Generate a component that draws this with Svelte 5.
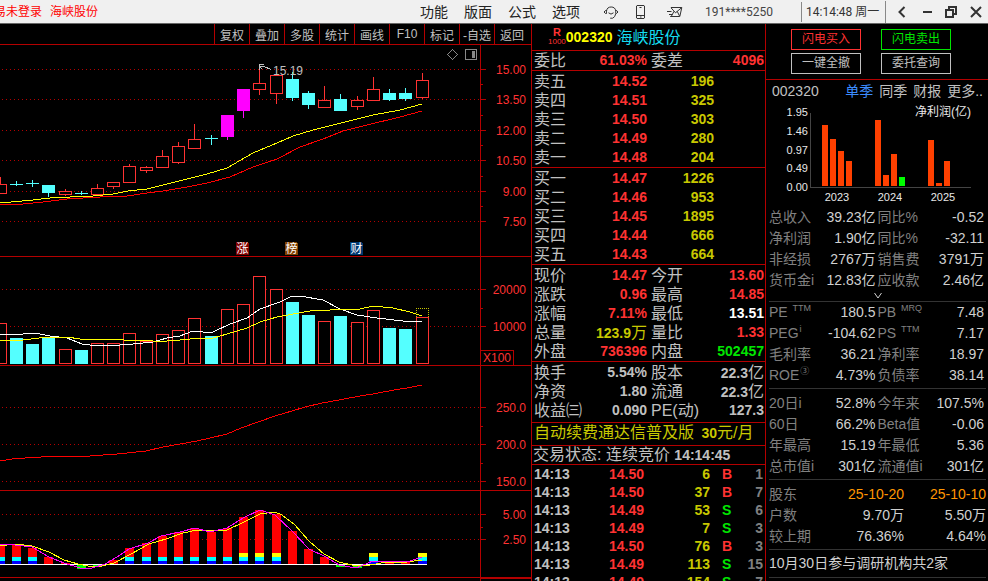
<script lang="ts">
	/**
	 * Stock terminal — K-line chart stack on the left, level-5 quote
	 * board in the middle, fundamentals on the right.
	 *
	 * All chart panels share one vertical coordinate system; each
	 * panel's viewBox starts at its own `top`.
	 */

	type Candle = [kind: 'up' | 'down' | 'limit' | 'doji', high: number, open: number, close: number, low: number];
	type Tone = 'up' | 'down' | 'vol' | 'flat' | 'plain';
	type Cell = [label: string, value: string, tone?: Tone, sup?: string];

	const menus = ['功能', '版面', '公式', '选项'];
	const tools = ['复权', '叠加', '多股', '统计', '画线', 'F10', '标记', '-自选', '返回'];

	const candles: Candle[] = [
		['up', 177, 184, 193, 193],
		['doji', 181, 184, 184, 186],
		['doji', 180, 183, 183, 187],
		['down', 185, 185, 193, 197],
		['up', 189, 191, 194, 196],
		['doji', 191, 193, 193, 195],
		['up', 184, 188, 194, 195],
		['up', 182, 182, 186, 189],
		['up', 164, 166, 182, 183],
		['up', 166, 167, 170, 173],
		['up', 150, 156, 167, 167],
		['up', 142, 146, 162, 164],
		['up', 124, 139, 148, 148],
		['doji', 135, 138, 138, 145],
		['limit', 115, 115, 137, 140],
		['limit', 89, 89, 111, 118],
		['up', 65, 83, 89, 95],
		['up', 75, 75, 93, 104],
		['down', 72, 79, 98, 101],
		['down', 91, 93, 105, 109],
		['up', 86, 100, 107, 107],
		['down', 94, 99, 111, 111],
		['up', 96, 100, 106, 110],
		['up', 77, 89, 100, 101],
		['down', 89, 93, 100, 101],
		['down', 88, 93, 99, 101],
		['up', 73, 80, 97, 99]
	];

	const volumeTops = [
		323, 338, 344, 338, 349, 350, 343, 343, 333, 341, 334, 330, 318, 336, 309, 304, 276, 289, 302,
		315, 321, 316, 322, 310, 328, 329, 317
	];
	const fallingVolume = [1, 2, 3, 5, 13, 18, 19, 21, 24, 25];

	// top edge of each histogram bar; values past the baseline hang below it
	const histogram = [
		545, 545, 548, 557, 563, 569, 567, 560, 548, 543, 536, 532, 528, 532, 528, 517, 510, 514, 531,
		549, 557, 567, 568, 564, 561, 562, 564
	];
	const BASELINE = 564;
	const strongDays = [0, 1, 2, 8, 9, 10, 11, 12, 13, 14, 15, 16, 17, 23, 26];
	const hotDays = [15, 16, 17, 23, 26];

	const panels = [
		{
			id: 'price',
			top: 45,
			height: 211,
			labels: [
				[69, '15.00'],
				[99, '13.50'],
				[130, '12.00'],
				[160, '10.50'],
				[191, '9.00'],
				[221, '7.50']
			],
			minor: [84, 115, 145, 176, 206]
		},
		{
			id: 'volume',
			top: 257,
			height: 108,
			labels: [
				[289, '20000'],
				[326, '10000']
			],
			minor: [308]
		},
		{
			id: 'trend',
			top: 366,
			height: 124,
			labels: [
				[407, '250.0'],
				[444, '200.0'],
				[481, '150.0']
			],
			minor: [426, 463]
		},
		{
			id: 'macd',
			top: 491,
			height: 86,
			labels: [
				[514, '5.00'],
				[539, '2.50']
			],
			minor: [527]
		}
	] as { id: string; top: number; height: number; labels: [number, string][]; minor: number[] }[];

	const badges = [
		{ x: 236, text: '涨', kind: 'rise' },
		{ x: 285, text: '榜', kind: 'rank' },
		{ x: 350, text: '财', kind: 'report' }
	];

	const asks = [
		['卖五', '14.52', '196'],
		['卖四', '14.51', '325'],
		['卖三', '14.50', '303'],
		['卖二', '14.49', '280'],
		['卖一', '14.48', '204']
	];
	const bids = [
		['买一', '14.47', '1226'],
		['买二', '14.46', '953'],
		['买三', '14.45', '1895'],
		['买四', '14.44', '666'],
		['买五', '14.43', '664']
	];

	const quote: Cell[] = [
		['现价', '14.47', 'up'],
		['今开', '13.60', 'up'],
		['涨跌', '0.96', 'up'],
		['最高', '14.85', 'up'],
		['涨幅', '7.11%', 'up'],
		['最低', '13.51', 'flat'],
		['总量', '123.9万', 'vol'],
		['量比', '1.33', 'up'],
		['外盘', '736396', 'up'],
		['内盘', '502457', 'down']
	];
	const shares: Cell[] = [
		['换手', '5.54%'],
		['股本', '22.3亿'],
		['净资', '1.80'],
		['流通', '22.3亿'],
		['收益㈢', '0.090'],
		['PE(动)', '127.3']
	];

	const trades = [
		['14:13', '14.50', '6', 'B', '1'],
		['14:13', '14.50', '37', 'B', '7'],
		['14:13', '14.49', '53', 'S', '6'],
		['14:13', '14.49', '7', 'S', '3'],
		['14:13', '14.50', '76', 'B', '3'],
		['14:13', '14.49', '113', 'S', '15'],
		['14:13', '14.49', '154', 'S', '7']
	];

	const profitBars = [
		{ x: 822, top: 125 },
		{ x: 830, top: 139 },
		{ x: 838, top: 151 },
		{ x: 846, top: 161 },
		{ x: 875, top: 120 },
		{ x: 883, top: 175 },
		{ x: 891, top: 154 },
		{ x: 899, top: 177, forecast: true },
		{ x: 928, top: 140 },
		{ x: 936, top: 183 },
		{ x: 944, top: 161 }
	];
	const profitScale: [number, string][] = [
		[112, '1.95'],
		[131, '1.46'],
		[150, '0.97'],
		[168, '0.49'],
		[187, '0.00']
	];
	const profitYears: [number, string][] = [
		[837, '2023'],
		[890, '2024'],
		[943, '2025']
	];

	const income: Cell[] = [
		['总收入', '39.23亿'],
		['同比%', '-0.52'],
		['净利润', '1.90亿'],
		['同比%', '-32.11'],
		['非经损', '2767万'],
		['销售费', '3791万'],
		['货币金i', '12.83亿'],
		['应收款', '2.46亿']
	];
	const ratios: Cell[] = [
		['PE ', '180.5', 'plain', 'TTM'],
		['PB ', '7.48', 'plain', 'MRQ'],
		['PEG', '-104.62', 'plain', 'i'],
		['PS ', '7.17', 'plain', 'TTM'],
		['毛利率', '36.21'],
		['净利率', '18.97'],
		['ROE', '4.73%', 'plain', '③'],
		['负债率', '38.14']
	];
	const performance: Cell[] = [
		['20日i', '52.8%'],
		['今年来', '107.5%'],
		['60日', '66.2%'],
		['Beta值', '-0.06'],
		['年最高', '15.19'],
		['年最低', '5.36'],
		['总市值i', '301亿'],
		['流通值i', '301亿']
	];

	let period = $state('单季');

	function slot(i: number) {
		return Math.floor(i * 16.232 + 0.1);
	}
</script>

{#snippet cells(rows: Cell[])}
	{#each rows as [label, value, tone, sup]}
		<div class="cell">
			<dt>{label}{#if sup}<sup>{sup}</sup>{/if}</dt>
			<dd class={tone ?? 'plain'}>
				{value.replace(/[万亿]/, '')}{#if /[万亿]/.test(value)}<span class="magnitude">{value.slice(-1)}</span>{/if}
			</dd>
		</div>
	{/each}
{/snippet}

{#snippet depth(rows: string[][])}
	<table class="depth">
		<tbody>
			{#each rows as [name, price, size]}
				<tr>
					<th scope="row">{name}</th>
					<td class="up price">{price}</td>
					<td class="vol size">{size}</td>
					<td></td>
				</tr>
			{/each}
		</tbody>
	</table>
{/snippet}

<div class="terminal">
	<header class="titlebar">
		<div class="login"><span>易未登录</span></div>
		<span class="stock-title">海峡股份</span>
		<nav class="menus">
			{#each menus as item}
				<button type="button">{item}</button>
			{/each}
		</nav>
		<div class="icons">
			<button type="button" aria-label="客服">
				<svg width="16" height="16" viewBox="0 0 16 16">
					<path d="M3.500 7a4.700 4.700 0 0 1 9.300 0M3.300 6.500H2.500L1 8l1.500 1.500h1zM12.800 6.500h.8L15 8l-1.500 1.500h-.8zM5.500 8.800q2.500 2.600 5 0M12.700 9.800q-.5 3.200-3 4.400H7.200" />
				</svg>
			</button>
			<button type="button" aria-label="手机">
				<svg width="16" height="16" viewBox="0 0 16 16">
					<path d="M2 1.500h7l.5.5v12l-.5.500H2l-.5-.5V2zM1.500 11.500h8M5 13h1.500M4.500 3.500h2" />
				</svg>
			</button>
			<button type="button" aria-label="消息">
				<svg width="16" height="16" viewBox="0 0 16 16">
					<path d="M4 3.500h10.800l-2 9H3.200M4 3.800l4.500 5 6-5M0 7.500h4.500M2 10.500h3.500M7 7.300 4.500 12M10.200 7.300l2.300 4.700" />
				</svg>
			</button>
		</div>
		<span class="account">191****5250</span>
		<time class="clock">14:14:48 周一</time>
		<div class="window-controls">
			<button type="button" aria-label="后退">
				<svg width="12" height="12" viewBox="0 0 12 12"><path d="M8.500 1 3.500 6l5 5" /></svg>
			</button>
			<button type="button" aria-label="最小化">
				<svg width="12" height="12" viewBox="0 0 12 12"><path d="M2 6h9" /></svg>
			</button>
			<button type="button" aria-label="还原">
				<svg width="12" height="12" viewBox="0 0 12 12"><path d="M1 4h7v7H1zM4 4V1h7v7H8" /></svg>
			</button>
			<button type="button" aria-label="关闭">
				<svg width="12" height="12" viewBox="0 0 12 12"><path d="m1 1 10 10M11 1 1 11" /></svg>
			</button>
		</div>
	</header>

	<main>
		<section class="charts">
			<div class="tools">
				{#each tools as tool}
					<button type="button">{tool}</button>
				{/each}
			</div>

			{#each panels as panel (panel.id)}
				<div class="panel">
					<div class="plot">
						<svg width="480" height={panel.height} viewBox="0 {panel.top} 480 {panel.height}">
							{#each panel.labels as [y]}
								<line class="grid" x1="-1998" x2="480" y1={y + 0.5} y2={y + 0.5} />
							{/each}

							{#if panel.id === 'price'}
								{#each candles as [kind, high, open, close, low], i}
									{@const x = slot(i)}
									<g class={kind}>
										<rect class="wick" {x} y={high} width="1" height={low - high} />
										{#if kind === 'up'}
											<rect class="hollow" x={x - 5.5} y={open + 0.5} width="12" height={close - open} />
										{:else if kind === 'doji'}
											<rect class="wick" x={x - 6} y={open} width="13" height="1" />
										{:else}
											<rect class="wick" x={x - 6} y={open} width="13" height={close - open} />
										{/if}
									</g>
								{/each}
								<polyline class="yellow" points="0,203 33,200 50,198 70,197 93,196 113,194 128,191 147,189 167,184 187,179 207,174 227,168 253,153 277,143 293,136 313,130 333,125 353,120 373,115 400,110 422,104" />
								<polyline class="red" points="0,205 23,204 43,202 67,199 100,197 127,196 147,193 163,191 187,187 207,183 230,177 253,167 277,159 300,147 323,139 343,131 367,125 400,117 422,111" />
								<path class="pointer" d="M259.500 70v-6h4M260 66h3l8 3.500M260 67l2 2" />
								<text class="peak" x="273" y="75">15.19</text>
								{#each badges as badge}
									<path class="badge {badge.kind}" d="M{badge.x} 242h11l2 2v11h-13z" />
									<text class="badge-text" x={badge.x + 6.5} y="253">{badge.text}</text>
								{/each}
								<path class="corner-icon" d="m452.500 49.500 5 5-5 5-5-5z" />
								<rect class="corner-icon" x="465.500" y="49.500" width="11" height="10" rx="1" />
								<rect class="corner-fill" x="472" y="51" width="3" height="7" />
							{:else if panel.id === 'volume'}
								{#each volumeTops as y, i}
									{#if fallingVolume.includes(i)}
										<rect class="cyan" x={slot(i) - 6} {y} width="13" height={364 - y} />
									{:else}
										<rect class="hollow" x={slot(i) - 5.5} y={y + 0.5} width="12" height={363 - y} />
									{/if}
								{/each}
								<path class="projected" d="M416.500 317v-8.500h12v8.500" />
								<polyline class="white" points="0,334 23,334 25,333 35,333 50,336 67,338 82,344 90,345 120,345 133,344 153,342 167,338 180,336 193,331 203,332 213,332 230,324 247,318 260,309 280,302 292,296 300,296 323,300 340,309 357,315 377,318 403,321 422,321" />
								<polyline class="yellow" points="0,341 23,340 47,337 67,337 80,339 122,339 124,340 153,341 167,341 180,340 200,338 213,338 227,334 247,328 260,322 277,317 293,314 310,311 330,310 360,309 373,306 393,308 410,312 422,316" />
							{:else if panel.id === 'trend'}
								<polyline class="red" points="0,461 12,459 25,458 41,457 58,456 90,456 117,454 146,451 163,447 180,444 197,441 210,438 227,434 241,428 258,422 275,416 292,411 305,407 322,403 339,400 360,396 373,394 394,390 407,388 422,385" />
							{:else}
								{#each histogram as y, i}
									{@const x = slot(i) - 4}
									{#if y <= BASELINE}
										<rect class="bar-red" {x} {y} width="9" height={BASELINE - y} />
									{:else}
										<rect class="bar-green" {x} y={BASELINE} width="9" height={y - BASELINE} />
									{/if}
									{#if strongDays.includes(i)}
										<rect class="bar-aqua" {x} y="557" width="9" height="4" />
										<rect class="bar-blue" {x} y="561" width="9" height="3" />
									{/if}
									{#if hotDays.includes(i)}
										<rect class="bar-yellow" {x} y="553" width="9" height="4" />
									{/if}
								{/each}
								<rect class="baseline" x="0" y={BASELINE} width="427" height="1" />
								<polyline class="yellow" points="0,546 15,544 32,546 49,552 64,560 78,564 88,566 98,567 114,563 131,554 149,544 166,539 183,533 197,530 227,530 244,522 260,514 275,512 282,515 294,524 309,541 324,554 339,562 356,566 370,565 387,562 407,562 422,560" />
								<polyline class="magenta" points="0,544 15,545 32,547 49,557 64,563 80,568 92,568 105,564 117,557 129,549 148,543 161,536 180,532 195,528 210,532 227,528 243,518 260,510 275,515 292,531 309,549 326,557 339,565 356,568 373,561 394,561 407,562 422,557" />
							{/if}
						</svg>
					</div>
					<svg class="axis" width="50" height={panel.height} viewBox="0 {panel.top} 50 {panel.height}">
						{#each panel.labels as [y, text]}
							<rect class="tick" x="0" {y} width="5" height="1" />
							<text x="45" y={y + 5}>{text}</text>
						{/each}
						{#each panel.minor as y}
							<rect class="tick" x="0" {y} width="2" height="1" />
						{/each}
						{#if panel.id === 'volume'}
							<path class="unit" d="M0 350.500h32.500V365" />
							<text x="30" y="362">X100</text>
						{/if}
					</svg>
				</div>
			{/each}
			<div class="panel rest">
				<div class="plot"></div>
				<div class="axis next"></div>
			</div>
		</section>

		<section class="board">
			<h1>
				<span class="margin-tag"><b>R</b><small>1000</small></span>
				<b class="code">002320</b>
				<span class="name">海峡股份</span>
			</h1>
			<dl class="pairs ratio">
				{@render cells([
					['委比', '61.03%', 'up'],
					['委差', '4096', 'up']
				])}
			</dl>
			{@render depth(asks)}
			{@render depth(bids)}
			<dl class="pairs">{@render cells(quote)}</dl>
			<dl class="pairs shares">{@render cells(shares)}</dl>
			<a class="promo" href="#renew">自动续费通达信普及版 <b>30</b>元/月</a>
			<p class="status">交易状态: 连续竞价 <b>14:14:45</b></p>
			<table class="trades">
				<tbody>
					{#each trades as [time, price, size, side, count]}
						<tr>
							<td>{time}</td>
							<td class="up num">{price}</td>
							<td class="vol num">{size}</td>
							<td class="side {side === 'B' ? 'up' : 'down'}">{side}</td>
							<td class="count num">{count}</td>
						</tr>
					{/each}
				</tbody>
			</table>
		</section>

		<aside class="info">
			<div class="orders">
				<button type="button" class="buy">闪电买入</button>
				<button type="button" class="sell">闪电卖出</button>
				<button type="button">一键全撤</button>
				<button type="button">委托查询</button>
			</div>
			<div class="periods">
				<span>002320</span>
				<div class="tabs">
					{#each ['单季', '同季', '财报', '更多..'] as name}
						<button type="button" class:active={period === name} onclick={() => (period = name)}>{name}</button>
					{/each}
				</div>
			</div>
			<svg class="profit" width="222" height="105" viewBox="766 102 222 105">
				{#each profitScale as [y, text]}
					<text class="scale" x="808" y={y + 4}>{text}</text>
				{/each}
				{#each profitYears as [x, text]}
					<text class="year" {x} y="201">{text}</text>
				{/each}
				<text class="profit-title" x="971" y="116">净利润(亿)</text>
				<path class="frame" d="M810.500 113v74.500H971" />
				{#each profitBars as bar}
					<rect class:forecast={bar.forecast} x={bar.x} y={bar.top} width="6" height={186 - bar.top} />
				{/each}
			</svg>
			<dl class="facts">{@render cells(income)}</dl>
			<button type="button" class="more" aria-label="展开">
				<svg width="8" height="8" viewBox="0 0 8 8"><path d="m.5 1 3.500 5 3.500-5" /></svg>
			</button>
			<dl class="facts ruled">{@render cells(ratios)}</dl>
			<dl class="facts ruled spaced">{@render cells(performance)}</dl>
			<table class="holders">
				<tbody>
					<tr class="dates"><th scope="row">股东</th><td>25-10-20</td><td>25-10-10</td></tr>
					<tr><th scope="row">户数</th><td>9.70万</td><td>5.50万</td></tr>
					<tr><th scope="row">较上期</th><td>76.36%</td><td>4.64%</td></tr>
				</tbody>
			</table>
			<p class="news">10月30日参与调研机构共2家</p>
		</aside>
	</main>
</div>

<style>
	:global(body) {
		background: #000;
	}

	.terminal {
		--line: #b40000;
		--up: #ff3232;
		--down: #00e600;
		--vol: #c8c800;
		--text: #c0c0c0;
		display: flex;
		flex-direction: column;
		height: 100vh;
		overflow: hidden;
		background: #000;
		color: var(--text);
		font-family: 'Liberation Sans', 'Noto Sans CJK SC', sans-serif;
		font-size: 14px;
	}

	button {
		padding: 0;
		border: 0;
		background: none;
		color: inherit;
		font: inherit;
		white-space: nowrap;
		cursor: pointer;
	}

	dl,
	dd,
	p,
	h1 {
		margin: 0;
	}

	table {
		border-collapse: collapse;
	}

	th,
	td {
		padding: 0;
		font-weight: inherit;
	}

	svg {
		display: block;
	}

	.up {
		color: var(--up);
	}
	.down {
		color: var(--down);
	}
	.vol {
		color: var(--vol);
	}
	.flat {
		color: #fff;
	}

	/* title bar */
	.titlebar {
		display: flex;
		flex: none;
		align-items: center;
		height: 23px;
		border-bottom: 1px solid #666;
		background: #f0f0f0;
		color: #222;
		font-size: 14px;
		line-height: 20px;
	}

	.login {
		display: flex;
		justify-content: flex-end;
		width: 42px;
		margin-right: 8px;
		overflow: hidden;
	}

	.login,
	.stock-title {
		color: #f00;
		font-size: 12px;
		white-space: nowrap;
	}

	.menus {
		display: flex;
		gap: 16px;
		margin: 0 23px 0 auto;
	}

	.icons {
		display: flex;
		gap: 16px;
		margin-right: 22px;
	}

	.icons svg {
		fill: none;
		stroke: #333;
	}

	.account {
		width: 96px;
		color: #444;
		font-family: Roboto, sans-serif;
		font-size: 12px;
	}

	.clock {
		box-sizing: border-box;
		width: 84px;
		padding-left: 4px;
		border-left: 1px solid #888;
		color: #333;
		font-family: Roboto, 'Noto Sans CJK SC', sans-serif;
		font-size: 12px;
		white-space: nowrap;
	}

	.window-controls {
		display: flex;
		box-sizing: border-box;
		width: 103px;
		padding-left: 4px;
		border-left: 1px solid #888;
	}

	.window-controls button {
		display: flex;
		flex: 1;
		align-items: center;
		justify-content: center;
		height: 22px;
	}

	.window-controls svg {
		fill: none;
		stroke: #333;
		stroke-width: 2;
	}

	main {
		display: grid;
		flex: 1;
		grid-template-columns: minmax(0, 1fr) 235px 222px;
		min-height: 0;
	}

	/* charts */
	.charts {
		display: flex;
		flex-direction: column;
		min-width: 0;
		overflow: hidden;
	}

	.tools {
		display: flex;
		flex: none;
		justify-content: flex-end;
		height: 20px;
		padding-right: 2px;
		border-bottom: 1px solid var(--line);
	}

	.tools button {
		width: 35px;
		border-left: 1px solid var(--line);
		font-size: 12px;
	}

	.panel {
		display: flex;
		flex: none;
		border-bottom: 1px solid var(--line);
	}

	.plot {
		display: flex;
		flex: 1;
		justify-content: flex-end;
		min-width: 0;
		overflow: hidden;
	}

	.plot svg {
		flex: none;
		overflow: visible;
		shape-rendering: crispEdges;
	}

	.axis {
		flex: none;
		border-left: 1px solid var(--line);
		fill: var(--up);
		font-size: 12px;
		text-anchor: end;
		shape-rendering: crispEdges;
	}

	.rest {
		flex: 1;
		border: 0;
	}

	.next {
		width: 50px;
		border-top: 1px solid var(--line);
	}

	.tick {
		fill: var(--line);
	}
	.unit {
		fill: none;
		stroke: var(--line);
	}
	.grid {
		stroke: var(--line);
		stroke-dasharray: 1 3;
	}

	.wick {
		fill: var(--up);
	}
	.down .wick,
	.doji .wick,
	.cyan {
		fill: #54ffff;
	}
	.limit .wick {
		fill: #f0f;
	}
	.hollow {
		fill: #000;
		stroke: var(--up);
	}

	polyline {
		fill: none;
	}
	.yellow {
		stroke: #ff0;
	}
	.red {
		stroke: #f00;
	}
	.white {
		stroke: #fff;
	}
	.magenta {
		stroke: #f0f;
	}
	.projected {
		fill: none;
		stroke: var(--vol);
		stroke-dasharray: 1 1;
	}

	.bar-red {
		fill: #f00;
	}
	.bar-green {
		fill: #0f0;
	}
	.bar-aqua {
		fill: #0ff;
	}
	.bar-blue {
		fill: #00f;
	}
	.bar-yellow {
		fill: #ff0;
	}
	.baseline {
		fill: #fff;
	}

	.pointer {
		fill: none;
		stroke: var(--text);
	}
	.peak {
		fill: var(--text);
		font-size: 12px;
	}
	.rise {
		fill: #800000;
	}
	.rank {
		fill: #804000;
	}
	.report {
		fill: #003870;
	}
	.badge-text {
		fill: #fff;
		font-size: 12px;
		text-anchor: middle;
	}
	.corner-icon {
		fill: none;
		stroke: #888;
	}
	.corner-fill {
		fill: #888;
	}

	/* quote board */
	.board {
		border: solid var(--line);
		border-width: 0 1px;
		overflow: hidden;
		font-size: 16px;
		line-height: 19px;
	}

	.board > * {
		box-sizing: border-box;
		border-bottom: 1px solid var(--line);
	}

	h1 {
		display: flex;
		align-items: center;
		height: 27px;
		padding-left: 16px;
		font-size: 16px;
		font-weight: 400;
	}

	.margin-tag {
		display: flex;
		flex-direction: column;
		align-items: center;
		color: var(--up);
		font-size: 11px;
		line-height: 10px;
	}

	.margin-tag small {
		font-size: 8px;
	}

	.code {
		color: #ff0;
		font-size: 14px;
	}

	.name {
		margin-left: 4px;
		color: #14dcf0;
	}

	.pairs {
		display: grid;
		grid-template-columns: 1fr 1fr;
		column-gap: 4px;
		padding: 1px 1px 0 2px;
	}

	.ratio {
		padding-top: 0;
	}

	.shares {
		padding-bottom: 2px;
	}

	.cell {
		display: flex;
		justify-content: space-between;
		white-space: nowrap;
	}

	.pairs .cell {
		height: 19px;
	}

	.pairs dd,
	.depth td,
	.trades {
		font-size: 14px;
		font-weight: 700;
	}

	.pairs .magnitude {
		font-size: 16px;
		font-weight: 400;
	}

	.depth {
		display: block;
		padding: 1px 1px 0 2px;
	}

	.depth th {
		width: 32px;
		text-align: left;
	}

	.depth td {
		text-align: right;
	}

	.depth .price {
		width: 81px;
	}

	.depth .size {
		width: 67px;
	}

	.promo {
		display: block;
		height: 23px;
		padding-left: 2px;
		color: var(--vol);
		line-height: 20px;
		text-decoration: none;
		white-space: nowrap;
	}

	.promo b {
		margin-left: 3px;
	}

	.promo b,
	.status b {
		font-size: 14px;
	}

	.status {
		height: 19px;
		padding-left: 1px;
		line-height: 18px;
		white-space: nowrap;
	}

	.trades {
		width: 100%;
		border: 0;
		line-height: 18px;
		table-layout: fixed;
	}

	.trades td:first-child {
		width: 48px;
		padding-left: 2px;
	}

	.trades td:nth-child(2) {
		width: 62px;
	}

	.trades td:nth-child(3) {
		width: 66px;
	}

	.num {
		text-align: right;
	}

	.side {
		width: 24px;
		padding-left: 12px;
	}

	.count {
		padding-right: 2px;
		color: #808080;
	}

	/* fundamentals */
	.info {
		overflow: hidden;
		line-height: 21px;
	}

	.orders {
		display: grid;
		grid-template-columns: 70px 70px;
		gap: 3px 20px;
		padding: 5px 0 5px 25px;
		border-bottom: 1px solid var(--line);
	}

	.orders button {
		height: 21px;
		border: 1px solid var(--text);
		font-size: 12px;
		line-height: 19px;
	}

	.orders .buy {
		border-color: var(--up);
		color: var(--up);
	}

	.orders .sell {
		border-color: var(--down);
		color: var(--down);
	}

	.periods {
		display: flex;
		justify-content: space-between;
		height: 22px;
		padding: 0 5px 0 6px;
		line-height: 22px;
	}

	.tabs {
		display: flex;
		gap: 6px;
	}

	.tabs .active {
		color: #3c8cff;
	}

	.profit {
		shape-rendering: crispEdges;
		font-size: 11px;
		fill: #e8e8e8;
	}

	.profit rect {
		fill: #ff4000;
	}

	.profit rect.forecast {
		fill: #0f0;
	}

	.scale,
	.profit-title {
		text-anchor: end;
	}

	.year {
		text-anchor: middle;
	}

	.profit-title {
		font-size: 12px;
	}

	.frame {
		fill: none;
		stroke: #444;
	}

	.facts {
		display: grid;
		grid-template-columns: 1fr 1fr;
		column-gap: 2px;
		margin: 0 2px 0 3px;
		padding-right: 2px;
	}

	.facts .cell {
		height: 21px;
	}

	.facts dt,
	.holders th {
		color: #808080;
	}

	.facts dd,
	.holders td {
		color: #d0d0d0;
	}

	sup {
		margin-left: 1px;
		font-size: 9px;
		line-height: 1;
	}

	.ruled {
		padding-bottom: 2px;
		border-bottom: 1px solid #333;
	}

	.spaced {
		padding-top: 4px;
	}

	.more {
		display: flex;
		justify-content: center;
		box-sizing: border-box;
		width: calc(100% - 5px);
		height: 11px;
		margin: 0 2px 0 3px;
		padding-top: 1px;
		border-bottom: 1px solid #333;
	}

	.more svg {
		fill: none;
		stroke: #d0d0d0;
	}

	.holders {
		display: grid;
		margin: 0 2px 0 3px;
		padding: 4px 0 2px;
		border-bottom: 1px solid #333;
	}

	.holders tr {
		display: grid;
		grid-template-columns: 53px 1fr 1fr;
		height: 21px;
	}

	.holders th {
		text-align: left;
	}

	.holders td {
		text-align: right;
	}

	.holders .dates td {
		color: #ff9600;
	}

	.news {
		margin: 0 2px 0 3px;
		border-bottom: 1px solid #333;
		color: #d0d0d0;
		line-height: 27px;
		white-space: nowrap;
	}
</style>
